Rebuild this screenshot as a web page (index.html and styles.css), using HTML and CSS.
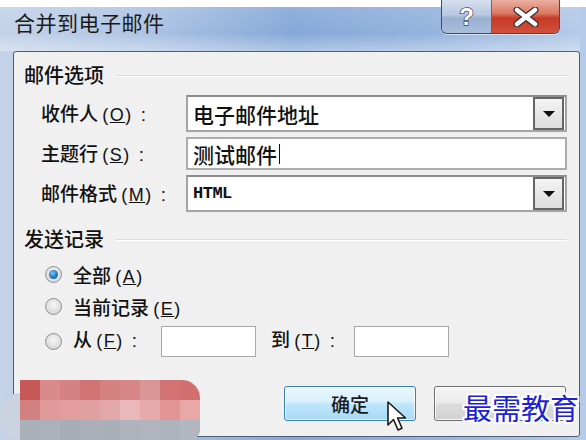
FILE: index.html
```html
<!DOCTYPE html>
<html lang="zh-CN">
<head>
    <meta charset="UTF-8">
    <meta name="viewport" content="width=device-width, initial-scale=1.0">
    <title>合并到电子邮件</title>
    <link rel="stylesheet" href="styles.css">
</head>
<body>
    <div class="window">
        <div class="titlebar">
            <span class="title">合并到电子邮件</span>
            <div class="caption-btns">
                <button class="cap cap-help">?</button>
                <button class="cap cap-close">
                    <svg width="26" height="20" viewBox="0 0 26 20">
                        <path d="M4 3 L22 17 M22 3 L4 17" stroke="#3a3030" stroke-width="7" stroke-linecap="round"/>
                        <path d="M4 3 L22 17 M22 3 L4 17" stroke="#ffffff" stroke-width="4.5" stroke-linecap="round"/>
                    </svg>
                </button>
            </div>
        </div>

        <div class="client">
            <!-- 邮件选项 -->
            <div class="group-head"><span>邮件选项</span><i class="rule"></i></div>
            <div class="form">
                <label class="lbl">收件人 <span class="key">(<u>O</u>)</span><span class="colon">:</span></label>
                <div class="combo">
                    <span class="combo-text">电子邮件地址</span>
                    <span class="drop"><i class="tri"></i></span>
                </div>

                <label class="lbl">主题行 <span class="key">(<u>S</u>)</span><span class="colon">:</span></label>
                <div class="edit"><span class="combo-text">测试邮件</span><i class="caret"></i></div>

                <label class="lbl">邮件格式 <span class="key">(<u>M</u>)</span><span class="colon">:</span></label>
                <div class="combo">
                    <span class="combo-text mono">HTML</span>
                    <span class="drop"><i class="tri"></i></span>
                </div>
            </div>

            <!-- 发送记录 -->
            <div class="group-head group-head-2"><span>发送记录</span><i class="rule"></i></div>
            <div class="radios">
                <div class="radio-row">
                    <i class="radio checked"></i>
                    <span>全部 <span class="key">(<u>A</u>)</span></span>
                </div>
                <div class="radio-row">
                    <i class="radio"></i>
                    <span>当前记录 <span class="key">(<u>E</u>)</span></span>
                </div>
                <div class="radio-row radio-range">
                    <i class="radio"></i>
                    <span class="range-lbl">从 <span class="key">(<u>F</u>)</span><span class="colon">:</span></span>
                    <div class="small-edit"></div>
                    <span class="range-lbl to-lbl">到 <span class="key">(<u>T</u>)</span><span class="colon">:</span></span>
                    <div class="small-edit"></div>
                </div>
            </div>

            <div class="buttons">
                <button class="btn btn-ok">确定</button>
                <button class="btn"></button>
            </div>
        </div>

        <!-- 鼠标指针 -->
        <svg class="cursor" width="24" height="32" viewBox="0 0 24 32">
            <path d="M2 1 L2 24 L7.5 18.5 L12 29 L16 27.2 L11.6 17 L19.5 17 Z" fill="#ffffff" stroke="#1a1a1a" stroke-width="1.6" stroke-linejoin="round"/>
        </svg>

        <!-- 打码区域 -->
        <div class="blob"></div>
        <div class="mosaic">
            <i style="background:#c85858"></i><i style="background:#d98a8a"></i><i style="background:#d68282"></i><i style="background:#d27474"></i><i style="background:#d68282"></i><i style="background:#d68686"></i><i style="background:#d89696"></i><i style="background:#d27272"></i><i style="background:#d27070"></i>
            <i style="background:#d28080"></i><i style="background:#e09a9a"></i><i style="background:#e29e9e"></i><i style="background:#e0a0a0"></i><i style="background:#e2a8a8"></i><i style="background:#e9b8b8"></i><i style="background:#e6aaaa"></i><i style="background:#e29494"></i><i style="background:#e8a8a8"></i>
            <i style="background:#abb1b9"></i><i style="background:#adb2ba"></i><i style="background:#a7adb5"></i><i style="background:#abb0b8"></i><i style="background:#a9afb7"></i><i style="background:#aeb3bb"></i><i style="background:#b0b5bd"></i><i style="background:#aeb3bb"></i><i style="background:#b2b7bf"></i>
        </div>

        <div class="watermark">最需教育</div>
    </div>
</body>
</html>
```

FILE: styles.css
```css
* {
  margin: 0;
  padding: 0;
  box-sizing: border-box;
}

body {
  width: 586px;
  height: 440px;
  overflow: hidden;
  background-color: #fff;
  font-family: "Noto Sans CJK SC", "Liberation Sans", sans-serif;
  font-weight: 500;
  color: #111;
}

.window {
  position: relative;
  margin-top: 7px;
  height: 433px;
  padding: 0 6px 3px 13px;
  display: flex;
  flex-direction: column;
  background: linear-gradient(90deg, #c4d3e8 0%, #adc4e3 25%, #86a8d8 50%, #93b2dd 72%, #b6cbe8 100%);
}

/* 标题栏 */
.titlebar {
  height: 44px;
  display: flex;
  align-items: flex-start;
  justify-content: space-between;
  margin-left: -13px;
  padding-left: 14px;
  background: linear-gradient(180deg, rgba(255, 255, 255, 0.1) 0%, rgba(255, 255, 255, 0) 60%, rgba(255, 255, 255, 0.35) 100%);
}

.title {
  font-size: 21px;
  font-weight: 400;
  line-height: 30px;
  margin-top: 0;
  color: #1a1a1a;
  letter-spacing: 0.5px;
}

.caption-btns {
  display: flex;
  margin-top: -7px;
  margin-right: 20px;
  border: 1px solid #3c4c62;
  border-top: none;
  border-radius: 0 0 6px 6px;
  overflow: hidden;
  box-shadow: 0 1px 0 rgba(255, 255, 255, 0.6);
}

.cap {
  height: 33px;
  border: none;
  display: flex;
  align-items: center;
  justify-content: center;
}

.cap-help {
  width: 50px;
  border-right: 1px solid #5a6a80;
  background: linear-gradient(180deg, #d5dfee 0%, #b8c8e0 45%, #9bb0d2 55%, #a9bedc 100%);
  color: #fff;
  font-family: "Liberation Sans", sans-serif;
  font-weight: bold;
  font-size: 24px;
  -webkit-text-stroke: 1.5px #3e4a5a;
  paint-order: stroke;
}

.cap-close {
  width: 67px;
  background: linear-gradient(180deg, #eab0a0 0%, #dc7a66 40%, #c53a26 55%, #d2503a 100%);
}

/* 客户区 */
.client {
  flex: 1;
  background-color: #f0f0f0;
  border: 1px solid #4e5e74;
  border-radius: 3px;
  padding: 11px 12px 0 10px;
  display: flex;
  flex-direction: column;
}

.group-head {
  display: flex;
  align-items: center;
  height: 24px;
  font-size: 20px;
}

.group-head span {
  line-height: 24px;
}

.group-head .rule {
  flex: 1;
  margin-left: 12px;
  margin-top: 2px;
  height: 2px;
  border-top: 1px solid #d6dde2;
  border-bottom: 1px solid #fff;
}

.group-head-2 {
  margin-top: 15px;
}

.key {
  font-family: "Liberation Sans", sans-serif;
  font-weight: normal;
  font-size: 18px;
  letter-spacing: 1.5px;
}

.colon {
  font-family: "Liberation Sans", sans-serif;
  font-weight: normal;
  margin-left: 8px;
}

.form {
  margin-top: 8px;
  padding-left: 17px;
  display: grid;
  grid-template-columns: 145px 381px;
  row-gap: 5px;
  align-items: center;
}

.lbl {
  font-size: 19px;
  line-height: 24px;
  white-space: nowrap;
}

.combo,
.edit {
  height: 37px;
  display: flex;
  align-items: center;
  justify-content: space-between;
  background-color: #fff;
  border: 2px solid #a4a4a4;
  border-top-color: #8c8c8c;
  padding: 0 1px 0 5px;
}

.edit {
  height: 33px;
  justify-content: flex-start;
  border-color: #acacac;
}

.combo-text {
  font-size: 21px;
  line-height: 26px;
  color: #111;
}

.mono {
  font-family: "Liberation Mono", monospace;
  font-weight: bold;
  font-size: 17px;
  letter-spacing: -0.5px;
}

.caret {
  width: 1px;
  height: 20px;
  background-color: #111;
  margin-left: 2px;
}

.drop {
  width: 31px;
  height: 33px;
  border: 2px solid #666;
  background: linear-gradient(180deg, #f4f4f4 0%, #dcdcdc 100%);
  display: flex;
  align-items: center;
  justify-content: center;
}

.tri {
  width: 0;
  height: 0;
  border-left: 6px solid transparent;
  border-right: 6px solid transparent;
  border-top: 6px solid #111;
}

/* 单选按钮 */
.radios {
  margin-top: 9px;
  padding-left: 21px;
  display: flex;
  flex-direction: column;
  gap: 4px;
}

.radio-row {
  display: flex;
  align-items: center;
  height: 28px;
  font-size: 19px;
  gap: 11px;
}

.radio-range {
  height: 31px;
  margin-top: 2px;
}

.radio {
  width: 17px;
  height: 17px;
  border-radius: 50%;
  border: 1px solid #8e8f8f;
  background: radial-gradient(circle at 50% 40%, #f6f6f6 0%, #dedede 60%, #c8c8c8 100%);
  display: flex;
  align-items: center;
  justify-content: center;
}

.radio.checked::after {
  content: "";
  width: 9px;
  height: 9px;
  border-radius: 50%;
  background: radial-gradient(circle at 40% 35%, #7cc4f0 0%, #1e78c0 55%, #0c4f90 100%);
}

.range-lbl {
  margin-top: -6px;
  white-space: nowrap;
  width: 77px;
}

.to-lbl {
  margin-left: 4px;
  width: 72px;
}

.small-edit {
  width: 95px;
  height: 31px;
  background-color: #fff;
  border: 1px solid #a8a8a8;
}

/* 底部按钮 */
.buttons {
  margin-top: 29px;
  display: flex;
  justify-content: flex-end;
  gap: 18px;
  padding-right: 1px;
}

.btn {
  width: 132px;
  height: 35px;
  border-radius: 3px;
  border: 1px solid #707070;
  background: linear-gradient(180deg, #f4f4f4 0%, #ebebeb 48%, #dcdcdc 52%, #d2d2d2 100%);
  font-family: "Noto Sans CJK SC", sans-serif;
  font-weight: 500;
  font-size: 19px;
  color: #1a1a1a;
  box-shadow: inset 0 0 0 1px rgba(255, 255, 255, 0.8);
}

.btn-ok {
  border-color: #3c7fb1;
  background: linear-gradient(180deg, #eaf6fd 0%, #d9f0fc 45%, #bee6fd 52%, #a7d9f5 100%);
}

/* 叠加层 */
.cursor {
  position: absolute;
  left: 386px;
  top: 394px;
}

.mosaic {
  position: absolute;
  left: 20px;
  top: 373px;
  width: 180px;
  height: 60px;
  display: grid;
  grid-template-columns: repeat(9, 20px);
  grid-template-rows: repeat(3, 20px);
  border-radius: 0 18px 10px 0;
  overflow: hidden;
}

.blob {
  position: absolute;
  left: 0;
  top: 386px;
  width: 40px;
  height: 47px;
  border-radius: 20px 0 0 20px;
  background-color: #cbd3e0;
}

.watermark {
  position: absolute;
  left: 463px;
  top: 382px;
  font-size: 29px;
  font-weight: 400;
  line-height: 36px;
  color: #1e22d6;
  -webkit-text-stroke: 4px #fff;
  paint-order: stroke;
}
```
